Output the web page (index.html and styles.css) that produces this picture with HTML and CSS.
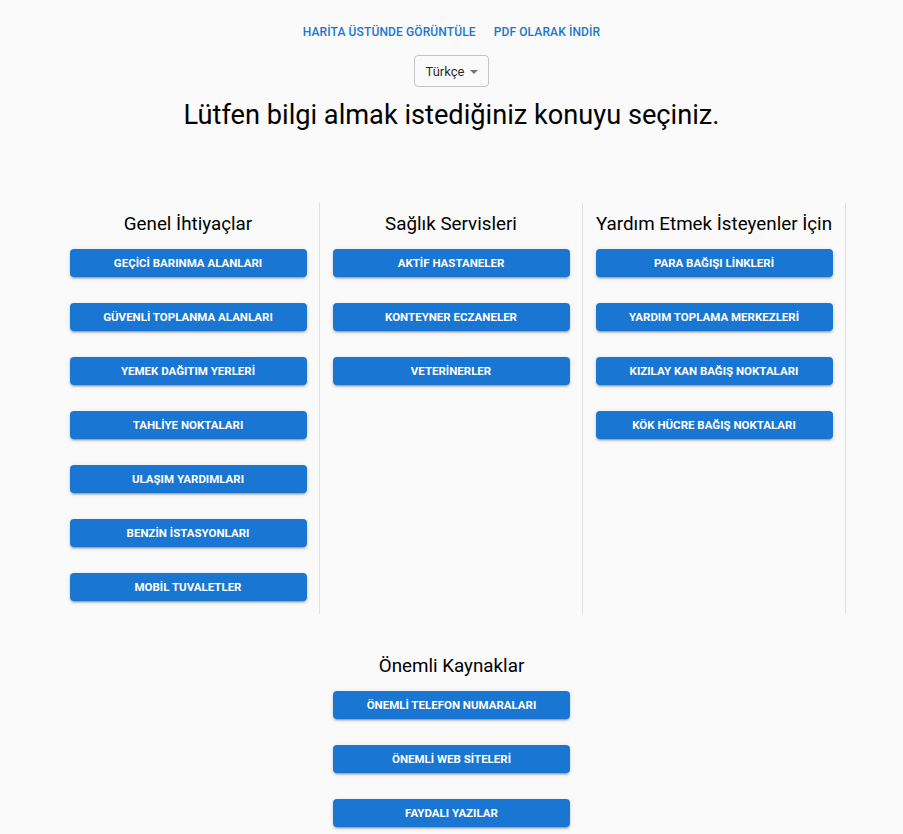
FILE: index.html
```html
<!DOCTYPE html>
<html lang="tr">
<head>
<meta charset="utf-8">
<title>Bilgi</title>
<link rel="stylesheet" href="styles.css">
</head>
<body>
<div class="page">
  <nav class="top-links">
    <a class="text-btn" href="#">Harita Üstünde Görüntüle</a>
    <a class="text-btn" href="#">PDF Olarak İndir</a>
  </nav>
  <div class="lang">
    <button class="lang-select">Türkçe <span class="caret"></span></button>
  </div>
  <h1 class="title">Lütfen bilgi almak istediğiniz konuyu seçiniz.</h1>

  <div class="columns">
    <section class="col">
      <h2 class="col-title">Genel İhtiyaçlar</h2>
      <a class="btn" href="#">GEÇİCİ BARINMA ALANLARI</a>
      <a class="btn" href="#">GÜVENLİ TOPLANMA ALANLARI</a>
      <a class="btn" href="#">YEMEK DAĞITIM YERLERİ</a>
      <a class="btn" href="#">TAHLİYE NOKTALARI</a>
      <a class="btn" href="#">ULAŞIM YARDIMLARI</a>
      <a class="btn" href="#">BENZİN İSTASYONLARI</a>
      <a class="btn" href="#">MOBİL TUVALETLER</a>
    </section>
    <section class="col">
      <h2 class="col-title">Sağlık Servisleri</h2>
      <a class="btn" href="#">AKTİF HASTANELER</a>
      <a class="btn" href="#">KONTEYNER ECZANELER</a>
      <a class="btn" href="#">VETERİNERLER</a>
    </section>
    <section class="col">
      <h2 class="col-title">Yardım Etmek İsteyenler İçin</h2>
      <a class="btn" href="#">PARA BAĞIŞI LİNKLERİ</a>
      <a class="btn" href="#">YARDIM TOPLAMA MERKEZLERİ</a>
      <a class="btn" href="#">KIZILAY KAN BAĞIŞ NOKTALARI</a>
      <a class="btn" href="#">KÖK HÜCRE BAĞIŞ NOKTALARI</a>
    </section>
  </div>

  <section class="resources">
    <h2 class="col-title">Önemli Kaynaklar</h2>
    <a class="btn" href="#">ÖNEMLİ TELEFON NUMARALARI</a>
    <a class="btn" href="#">ÖNEMLİ WEB SİTELERİ</a>
    <a class="btn" href="#">FAYDALI YAZILAR</a>
  </section>
</div>
</body>
</html>
```

FILE: styles.css
```css
html, body {
  margin: 0;
  padding: 0;
  background: #fafafa;
  font-family: Roboto, "Noto Sans", Arial, sans-serif;
  color: #000;
}

.page {
  display: flex;
  flex-direction: column;
  align-items: center;
  padding-top: 21px;
}

.top-links {
  display: flex;
  gap: 2px;
  justify-content: center;
}

.text-btn {
  color: #1976d2;
  text-decoration: none;
  text-transform: uppercase;
  font-size: 12px;
  font-weight: 500;
  letter-spacing: 0.01em;
  line-height: 22px;
  padding: 0 8px;
}

.lang {
  margin-top: 12px;
}

.lang-select {
  display: flex;
  align-items: center;
  gap: 6px;
  height: 32px;
  box-sizing: border-box;
  padding: 0 10px 0 11px;
  background: transparent;
  border: 1px solid #c4c4c4;
  border-radius: 4px;
  font-family: Roboto, Arial, sans-serif;
  font-size: 13px;
  color: rgba(0, 0, 0, 0.87);
}

.caret {
  width: 0;
  height: 0;
  border-left: 4px solid transparent;
  border-right: 4px solid transparent;
  border-top: 4px solid #757575;
  margin-top: 1px;
}

.title {
  margin: 12px 0 0;
  font-size: 27.2px;
  font-weight: 400;
  line-height: 32px;
}

.columns {
  display: flex;
  width: 789px;
  margin-top: 72px;
}

.col {
  flex: 1;
  display: flex;
  flex-direction: column;
  align-items: center;
  padding-top: 9px;
  border-right: 1px solid #e0e0e0;
}

.col-title {
  margin: 0;
  font-size: 18.8px;
  font-weight: 400;
  line-height: 24px;
  white-space: nowrap;
}

.btn {
  display: flex;
  align-items: center;
  justify-content: center;
  width: 237px;
  height: 28px;
  margin: 13px 0;
  box-sizing: border-box;
  background: #1976d2;
  color: #fff;
  text-decoration: none;
  border-radius: 4px;
  font-size: 11.5px;
  font-weight: 700;
  letter-spacing: 0;
  box-shadow: 0 3px 1px -2px rgba(0,0,0,0.2), 0 2px 2px 0 rgba(0,0,0,0.14), 0 1px 5px 0 rgba(0,0,0,0.12);
}

.resources {
  display: flex;
  flex-direction: column;
  align-items: center;
  margin-top: 40px;
}
```
